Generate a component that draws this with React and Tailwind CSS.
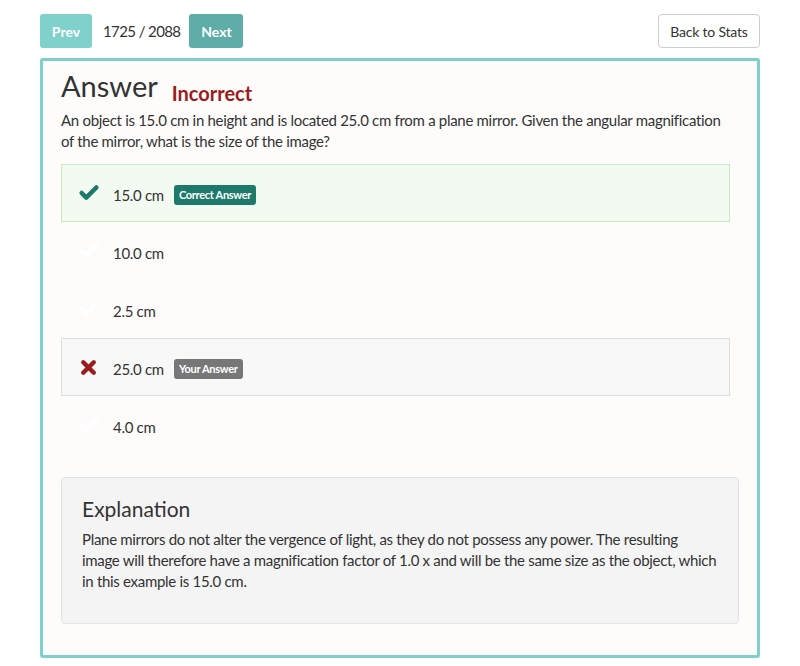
import { Check, X } from "lucide-react";

const options = [
  { label: "15.0 cm", state: "correct" },
  { label: "10.0 cm" },
  { label: "2.5 cm" },
  { label: "25.0 cm", state: "wrong" },
  { label: "4.0 cm" },
];

function OptionRow({ label, state }) {
  const box =
    state === "correct"
      ? "border-[#c9e8c3] bg-[#f3faf1]"
      : state === "wrong"
      ? "border-[#dddddd] bg-[#f8f8f8]"
      : "border-transparent";
  return (
    <div className={`flex h-[58px] items-center border ${box}`}>
      <div className="flex w-[51px] justify-center pl-[2px]">
        {state === "wrong" ? (
          <X size={21} strokeWidth={5} className="text-[#9b1c1c]" />
        ) : (
          <Check
            size={22}
            strokeWidth={5}
            className={state === "correct" ? "text-[#1d7a6a]" : "text-white"}
          />
        )}
      </div>
      <div className="flex items-center pt-[4px]">
        <span className="text-[15px] tracking-[-0.3px] text-[#333]">{label}</span>
        {state === "correct" && (
          <span className="ml-[10px] rounded-[3px] bg-[#1d7a6a] px-[5px] py-[2px] text-[11px] font-bold tracking-[-0.3px] text-white">
            Correct Answer
          </span>
        )}
        {state === "wrong" && (
          <span className="ml-[10px] rounded-[3px] bg-[#777777] px-[5px] py-[2px] text-[11px] font-bold tracking-[-0.3px] text-white">
            Your Answer
          </span>
        )}
      </div>
    </div>
  );
}

export default function App() {
  return (
    <div className="min-h-[666px] bg-white px-[40px] pt-[14px] font-['Lato','Open_Sans',sans-serif] text-[#333]">
      {/* top bar */}
      <div className="flex items-center">
        <button className="h-[34px] w-[52px] rounded-[3px] bg-[#80d0cb] text-[14px] font-bold text-white">
          Prev
        </button>
        <span className="ml-[11px] mr-[9px] text-[15px] tracking-[-0.6px] text-[#333]">1725 / 2088</span>
        <button className="h-[34px] w-[54px] rounded-[3px] bg-[#5fada8] text-[14px] font-bold text-white">
          Next
        </button>
        <button className="ml-auto h-[34px] w-[102px] rounded-[4px] border border-[#cccccc] bg-white text-[14px] tracking-[-0.2px] text-[#333]">
          Back to Stats
        </button>
      </div>

      {/* main panel */}
      <div className="mt-[10px] rounded-[3px] border-[3px] border-[#7fd0cc] bg-[#fdfcfb] px-[18px] pb-[31px] pt-[6px]">
        <div className="flex items-end">
          <h1 className="text-[29px] leading-[38px] text-[#333]">Answer</h1>
          <span className="mb-[-3px] ml-[14px] text-[20px] font-bold text-[#9b1b1b]">Incorrect</span>
        </div>
        <p className="mt-[5px] pr-[16px] text-[15px] leading-[21px] tracking-[-0.3px] text-[#333]">
          An object is 15.0 cm in height and is located 25.0 cm from a plane mirror. Given the angular
          magnification of the mirror, what is the size of the image?
        </p>

        <div className="mr-[9px] mt-[12px] flex flex-col">
          {options.map((o) => (
            <OptionRow key={o.label} {...o} />
          ))}
        </div>

        <div className="mt-[23px] rounded-[4px] border border-[#e3e3e3] bg-[#f4f4f4] px-[20px] pb-[31px] pt-[17px]">
          <h2 className="text-[21px] leading-[28px] text-[#333]">Explanation</h2>
          <p className="mt-[6px] text-[15px] leading-[21px] tracking-[-0.3px] text-[#333]">
            Plane mirrors do not alter the vergence of light, as they do not possess any power. The
            resulting image will therefore have a magnification factor of 1.0 x and will be the same
            size as the object, which in this example is 15.0 cm.
          </p>
        </div>
      </div>
    </div>
  );
}
